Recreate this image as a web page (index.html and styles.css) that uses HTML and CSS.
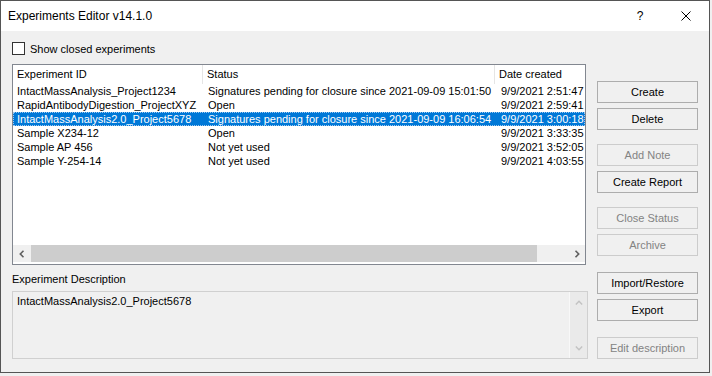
FILE: index.html
```html
<!DOCTYPE html>
<html lang="en">
<head>
  <meta charset="UTF-8" />
  <title>Experiments Editor v14.1.0</title>
  <link rel="stylesheet" href="styles.css">
</head>
<body>
  <div class="window">
    <div class="titlebar">
      <span class="title">Experiments Editor v14.1.0</span>
      <div class="caption-buttons">
        <span class="cap-btn">?</span>
        <span class="cap-btn">
          <svg width="10" height="10" viewBox="0 0 10 10"><path d="M0.5 0.5L9.5 9.5M9.5 0.5L0.5 9.5" stroke="#000" stroke-width="1" fill="none"/></svg>
        </span>
      </div>
    </div>

    <div class="dialog">
      <div class="main">
        <label class="check-row"><span class="checkbox"></span>Show closed experiments</label>

        <div class="listview">
          <div class="lv-header">
            <div>Experiment ID</div>
            <div>Status</div>
            <div>Date created</div>
          </div>
          <div class="lv-rows">
            <div class="lv-row"><div>IntactMassAnalysis_Project1234</div><div>Signatures pending for closure since 2021-09-09 15:01:50</div><div>9/9/2021 2:51:47</div></div>
            <div class="lv-row"><div>RapidAntibodyDigestion_ProjectXYZ</div><div>Open</div><div>9/9/2021 2:59:41</div></div>
            <div class="lv-row selected"><div>IntactMassAnalysis2.0_Project5678</div><div>Signatures pending for closure since 2021-09-09 16:06:54</div><div>9/9/2021 3:00:18</div></div>
            <div class="lv-row"><div>Sample X234-12</div><div>Open</div><div>9/9/2021 3:33:35</div></div>
            <div class="lv-row"><div>Sample AP 456</div><div>Not yet used</div><div>9/9/2021 3:52:05</div></div>
            <div class="lv-row"><div>Sample Y-254-14</div><div>Not yet used</div><div>9/9/2021 4:03:55</div></div>
          </div>
          <div class="hscroll">
            <span class="sb-btn"><svg width="6" height="8" viewBox="0 0 6 8"><path d="M4.5 0.8L1.3 4L4.5 7.2" stroke="#606060" stroke-width="1.6" fill="none"/></svg></span>
            <div class="sb-track"><div class="sb-thumb"></div></div>
            <span class="sb-btn"><svg width="6" height="8" viewBox="0 0 6 8"><path d="M1.5 0.8L4.7 4L1.5 7.2" stroke="#606060" stroke-width="1.6" fill="none"/></svg></span>
          </div>
        </div>

        <div class="desc-label">Experiment Description</div>
        <div class="desc-box">
          <div class="desc-text">IntactMassAnalysis2.0_Project5678</div>
          <div class="vscroll">
            <span class="sb-btn"><svg width="8" height="6" viewBox="0 0 8 6"><path d="M0.8 4.5L4 1.3L7.2 4.5" stroke="#c2c2c2" stroke-width="1.4" fill="none"/></svg></span>
            <span class="sb-btn"><svg width="8" height="6" viewBox="0 0 8 6"><path d="M0.8 1.5L4 4.7L7.2 1.5" stroke="#c2c2c2" stroke-width="1.4" fill="none"/></svg></span>
          </div>
        </div>
      </div>

      <div class="buttons">
        <div class="btn-group">
          <button class="btn">Create</button>
          <button class="btn">Delete</button>
        </div>
        <div class="btn-group">
          <button class="btn" disabled>Add Note</button>
          <button class="btn">Create Report</button>
        </div>
        <div class="btn-group">
          <button class="btn" disabled>Close Status</button>
          <button class="btn" disabled>Archive</button>
        </div>
        <div class="btn-group wide-gap">
          <button class="btn">Import/Restore</button>
          <button class="btn">Export</button>
        </div>
        <div class="btn-group wide-gap">
          <button class="btn" disabled>Edit description</button>
        </div>
      </div>
    </div>
  </div>
</body>
</html>
```

FILE: styles.css
```css
* {
  box-sizing: border-box;
}
body {
  margin: 0;
  background: #f0f0f0;
  font-family: 'Liberation Sans', Arial, sans-serif;
  font-size: 11px;
  color: #000;
}
.window {
  width: 710px;
  height: 373px;
  border: 1px solid #555;
  background: #f0f0f0;
  display: flex;
  flex-direction: column;
}
.titlebar {
  height: 30px;
  flex-shrink: 0;
  background: #fff;
  display: flex;
  align-items: center;
}
.title {
  flex: 1;
  padding-left: 7px;
  font-size: 12px;
}
.caption-buttons {
  display: flex;
}
.cap-btn {
  width: 46px;
  height: 30px;
  display: flex;
  align-items: center;
  justify-content: center;
  font-size: 12px;
}
.dialog {
  flex: 1;
  display: flex;
}
.main {
  width: 587px;
  padding: 11px 0 0 11px;
}
.check-row {
  display: flex;
  align-items: center;
  height: 13px;
}
.checkbox {
  width: 13px;
  height: 13px;
  border: 1px solid #333;
  background: #fff;
  margin-right: 5px;
}
.listview {
  margin-top: 9px;
  width: 574px;
  height: 201px;
  border: 1px solid #828790;
  background: #fff;
  display: flex;
  flex-direction: column;
  overflow: hidden;
}
.lv-header,
.lv-row {
  display: grid;
  grid-template-columns: 190px 292px 130px;
}
.lv-header {
  height: 19px;
  flex-shrink: 0;
}
.lv-header div {
  line-height: 19px;
  padding-left: 4px;
  border-right: 1px solid #e5e5e5;
  white-space: nowrap;
}
.lv-rows {
  flex: 1;
}
.lv-row {
  height: 14px;
  line-height: 14px;
  white-space: nowrap;
}
.lv-row div {
  overflow: hidden;
}
.lv-row div:nth-child(1) { padding-left: 4px; }
.lv-row div:nth-child(2) { padding-left: 5px; }
.lv-row div:nth-child(3) { padding-left: 6px; }
.lv-row.selected {
  background: #0078d7;
  color: #fff;
  outline: 1px dotted #9ec9f0;
  outline-offset: -1px;
}
.hscroll {
  height: 17px;
  flex-shrink: 0;
  margin-bottom: 2px;
  display: flex;
  background: #f0f0f0;
}
.sb-btn {
  width: 17px;
  height: 17px;
  flex-shrink: 0;
  display: flex;
  align-items: center;
  justify-content: center;
}
.sb-track {
  flex: 1;
}
.sb-thumb {
  width: 506px;
  height: 100%;
  margin-left: 1px;
  background: #cdcdcd;
}
.desc-label {
  margin-top: 8px;
  line-height: 13px;
}
.desc-box {
  margin-top: 5px;
  width: 576px;
  height: 68px;
  border: 1px solid #d0d0d0;
  background: #f0f0f0;
  display: flex;
}
.desc-text {
  flex: 1;
  padding: 3px 4px;
  line-height: 13px;
}
.vscroll {
  width: 18px;
  background: #eaeaea;
  border-left: 1px solid #f8f8f8;
  display: flex;
  flex-direction: column;
  justify-content: space-between;
  padding: 2px 0;
}
.buttons {
  width: 101px;
  margin-left: 9px;
  padding-top: 50px;
  display: flex;
  flex-direction: column;
}
.btn-group {
  display: flex;
  flex-direction: column;
  gap: 5px;
  margin-top: 14px;
}
.btn-group:first-child {
  margin-top: 0;
}
.btn-group.wide-gap {
  margin-top: 16px;
}
.btn {
  height: 22px;
  padding: 0;
  border: 1px solid #adadad;
  background: #f0f0f0;
  font-family: 'Liberation Sans', Arial, sans-serif;
  font-size: 11px;
  color: #000;
}
.btn:disabled {
  color: #838383;
  border-color: #cccccc;
}
```
